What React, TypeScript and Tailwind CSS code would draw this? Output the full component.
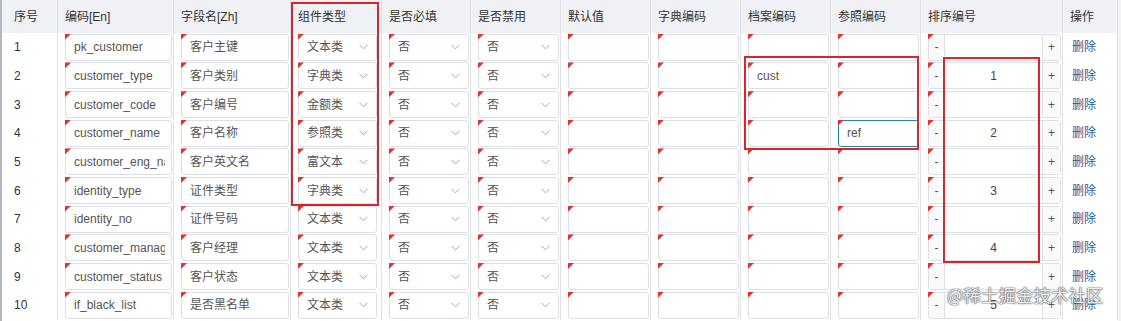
import React from 'react';

const W = [
  'w-[56px]',
  'w-[116px]',
  'w-[117px]',
  'w-[91px]',
  'w-[89px]',
  'w-[90px]',
  'w-[90px]',
  'w-[90px]',
  'w-[90px]',
  'w-[90px]',
  'w-[142px]',
  'w-[55px]',
];

const headers = ['序号', '编码[En]', '字段名[Zh]', '组件类型', '是否必填', '是否禁用', '默认值', '字典编码', '档案编码', '参照编码', '排序编号', '操作'];

const rows = [
  { en: 'pk_customer', zh: '客户主键', type: '文本类', dict: '', ref: '', sort: '' },
  { en: 'customer_type', zh: '客户类别', type: '字典类', dict: 'cust', ref: '', sort: '1' },
  { en: 'customer_code', zh: '客户编号', type: '金额类', dict: '', ref: '', sort: '' },
  { en: 'customer_name', zh: '客户名称', type: '参照类', dict: '', ref: 'ref', sort: '2' },
  { en: 'customer_eng_name', zh: '客户英文名', type: '富文本', dict: '', ref: '', sort: '' },
  { en: 'identity_type', zh: '证件类型', type: '字典类', dict: '', ref: '', sort: '3' },
  { en: 'identity_no', zh: '证件号码', type: '文本类', dict: '', ref: '', sort: '' },
  { en: 'customer_manager', zh: '客户经理', type: '文本类', dict: '', ref: '', sort: '4' },
  { en: 'customer_status', zh: '客户状态', type: '文本类', dict: '', ref: '', sort: '' },
  { en: 'if_black_list', zh: '是否黑名单', type: '文本类', dict: '', ref: '', sort: '5' },
];

// little red "changed" mark on the input corner
const Corner = () => (
  <span className="absolute -left-px -top-px h-[6px] w-[6px] bg-[#e4332c] [clip-path:polygon(0_0,100%_0,0_100%)]" />
);

const TextBox = ({ value, focused }: { value?: string; focused?: boolean }) => (
  <div
    className={`relative flex h-[27px] w-full items-center rounded-[3px] border bg-white pl-[8px] pr-[6px] ${
      focused ? 'border-[#2383b8]' : 'border-[#dcdfe6]'
    }`}
  >
    <Corner />
    <div className="min-w-0 flex-1 overflow-hidden whitespace-nowrap text-[#555]">{value}</div>
  </div>
);

const SelectBox = ({ value }: { value: string }) => (
  <div className="relative flex h-[27px] w-full items-center rounded-[3px] border border-[#dcdfe6] bg-white pl-[8px] pr-[8px]">
    <Corner />
    <div className="flex-1 whitespace-nowrap text-[#555]">{value}</div>
    <svg width="9" height="6" viewBox="0 0 9 6" className="shrink-0">
      <polyline points="0.5,0.8 4.5,4.8 8.5,0.8" fill="none" stroke="#a3a6ab" strokeWidth="1" />
    </svg>
  </div>
);

const NumberBox = ({ value }: { value: string }) => (
  <div className="relative flex h-[27px] w-full items-stretch rounded-[3px] border border-[#dcdfe6] bg-white">
    <Corner />
    <div className="flex w-[16px] items-center justify-center border-r border-[#dcdfe6] bg-[#fafafa] text-[#555]">-</div>
    <div className="flex flex-1 items-center justify-center text-[#444]">{value}</div>
    <div className="flex w-[18px] items-center justify-center border-l border-[#dcdfe6] bg-[#fafafa] text-[#555]">+</div>
  </div>
);

const Cell = ({ i, children }: { i: number; children?: React.ReactNode }) => (
  <div className={`${W[i]} flex shrink-0 items-center border-r border-[#dfe1e5] pl-[7px] pr-[1px]`}>{children}</div>
);

export default function App() {
  return (
    <div className="relative h-[321px] w-[1121px] overflow-hidden bg-[#f2f3f5] font-['Liberation_Sans','Noto_Sans_CJK_SC',sans-serif] text-[12px]">
      <div className="flex h-full w-[1118px] border-l-2 border-[#b3b7bf] bg-white">
        <div className="flex flex-col">
          {/* header */}
          <div className="flex h-[33px] bg-[#eff1f4] text-[#333]">
            {headers.map((h, i) => (
              <div
                key={h}
                className={`${W[i]} flex shrink-0 items-center border-r border-[#dfe1e5] ${i === 0 ? 'pl-[12px]' : 'pl-[7px]'}`}
              >
                {h}
              </div>
            ))}
          </div>

          {/* body */}
          {rows.map((r, idx) => (
            <div key={r.en} className="flex h-[28.67px]">
              <div className={`${W[0]} flex shrink-0 items-center border-r border-[#dfe1e5] pl-[12px] text-[#333]`}>{idx + 1}</div>
              <Cell i={1}>
                <TextBox value={r.en} />
              </Cell>
              <Cell i={2}>
                <TextBox value={r.zh} />
              </Cell>
              <Cell i={3}>
                <div className="w-full pr-[3px]">
                  <SelectBox value={r.type} />
                </div>
              </Cell>
              <Cell i={4}>
                <SelectBox value="否" />
              </Cell>
              <Cell i={5}>
                <SelectBox value="否" />
              </Cell>
              <Cell i={6}>
                <TextBox />
              </Cell>
              <Cell i={7}>
                <TextBox />
              </Cell>
              <Cell i={8}>
                <TextBox value={r.dict} />
              </Cell>
              <Cell i={9}>
                <TextBox value={r.ref} focused={r.ref !== ''} />
              </Cell>
              <Cell i={10}>
                <NumberBox value={r.sort} />
              </Cell>
              <div className={`${W[11]} flex shrink-0 items-center border-r border-[#dfe1e5] pl-[9px] text-[#2a5c9a]`}>删除</div>
            </div>
          ))}
        </div>
      </div>

      {/* red annotation boxes */}
      <div className="absolute left-[291px] top-[2px] h-[204px] w-[88px] border-2 border-[#d6252d]" />
      <div className="absolute left-[744px] top-[56px] h-[94px] w-[175px] border-2 border-[#d6252d]" />
      <div className="absolute left-[943px] top-[57px] h-[206px] w-[97px] border-2 border-[#d6252d]" />

      {/* watermark */}
      <div className="absolute left-[947px] top-[284px] whitespace-nowrap font-['Noto_Sans_CJK_SC',sans-serif] text-[17.5px] leading-[22px] text-white/90 [text-shadow:0_0_1px_#555,0_0_1px_#555,0_0_2px_#888]">
        @稀土掘金技术社区
      </div>
    </div>
  );
}
